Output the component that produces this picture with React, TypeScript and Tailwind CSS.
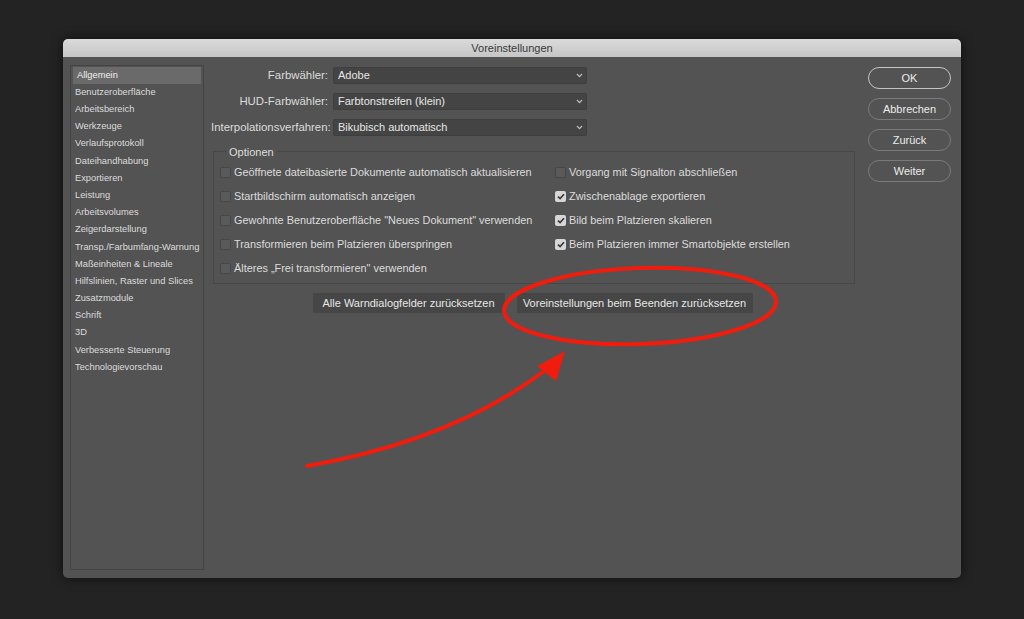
import React from 'react';

const SIDEBAR = [
  'Allgemein',
  'Benutzeroberfläche',
  'Arbeitsbereich',
  'Werkzeuge',
  'Verlaufsprotokoll',
  'Dateihandhabung',
  'Exportieren',
  'Leistung',
  'Arbeitsvolumes',
  'Zeigerdarstellung',
  'Transp./Farbumfang-Warnung',
  'Maßeinheiten & Lineale',
  'Hilfslinien, Raster und Slices',
  'Zusatzmodule',
  'Schrift',
  '3D',
  'Verbesserte Steuerung',
  'Technologievorschau',
];

const DROPDOWNS = [
  { label: 'Farbwähler:', value: 'Adobe' },
  { label: 'HUD-Farbwähler:', value: 'Farbtonstreifen (klein)' },
  { label: 'Interpolationsverfahren:', value: 'Bikubisch automatisch' },
];

const LEFT_OPTS = [
  { text: 'Geöffnete dateibasierte Dokumente automatisch aktualisieren', on: false },
  { text: 'Startbildschirm automatisch anzeigen', on: false },
  { text: 'Gewohnte Benutzeroberfläche "Neues Dokument" verwenden', on: false },
  { text: 'Transformieren beim Platzieren überspringen', on: false },
  { text: 'Älteres „Frei transformieren" verwenden', on: false },
];

const RIGHT_OPTS = [
  { text: 'Vorgang mit Signalton abschließen', on: false },
  { text: 'Zwischenablage exportieren', on: true },
  { text: 'Bild beim Platzieren skalieren', on: true },
  { text: 'Beim Platzieren immer Smartobjekte erstellen', on: true },
];

function Checkbox({ on }: { on: boolean }) {
  if (on) {
    return (
      <span className="flex h-[11px] w-[11px] shrink-0 items-center justify-center rounded-[2px] bg-[#d6d6d6]">
        <svg width="8" height="7" viewBox="0 0 8 7" aria-hidden="true">
          <path d="M1 3.6 L3.1 5.6 L7 1.2" fill="none" stroke="#3a3a3a" strokeWidth="1.7" />
        </svg>
      </span>
    );
  }
  return <span className="h-[11px] w-[11px] shrink-0 rounded-[2px] border border-[#464646] bg-[#5a5a5a]" />;
}

function Option({ text, on }: { text: string; on: boolean }) {
  return (
    <div className="flex h-6 items-center gap-[3px] whitespace-nowrap">
      <Checkbox on={on} />
      <span>{text}</span>
    </div>
  );
}

function SideButton({ children, primary }: { children: React.ReactNode; primary?: boolean }) {
  return (
    <button
      type="button"
      className={`flex h-[22px] w-[83px] items-center justify-center rounded-full border text-[11px] text-[#ececec] ${
        primary ? 'border-[#c4c4c4]' : 'border-[#7a7a7a]'
      }`}
    >
      {children}
    </button>
  );
}

export default function App() {
  return (
    <div
      className="relative h-[619px] w-[1024px] overflow-hidden bg-[#232323] pl-[63px] pt-[39px] text-[10.9px] text-[#dcdcdc]"
      style={{ fontFamily: '"Liberation Sans", Arial, sans-serif' }}
    >
      <div className="flex h-[539px] w-[898px] flex-col overflow-hidden rounded-[5px] bg-[#535353] shadow-[0_0_12px_rgba(0,0,0,0.6)]">
        {/* title bar */}
        <div className="flex h-[18px] shrink-0 items-center justify-center bg-gradient-to-b from-[#dadada] to-[#c6c6c6] text-[11px] text-[#3a3a3a]">
          Voreinstellungen
        </div>

        <div className="flex flex-1 pb-2">
          {/* sidebar */}
          <div className="ml-[7px] mt-[8px] w-[134px] border border-[#444] pt-[1px] text-[9.3px]">
            {SIDEBAR.map((s, i) => (
              <div
                key={s}
                className={`flex h-[17.2px] items-center whitespace-nowrap pl-[4px] ${
                  i === 0 ? 'mx-[2px] bg-[#6a6a6a] pl-[2px] text-[#f0f0f0]' : ''
                }`}
              >
                {s}
              </div>
            ))}
          </div>

          {/* main */}
          <div className="flex w-[657px] flex-col pt-[10px]">
            <div className="flex flex-col gap-[9px] pl-[7px]">
              {DROPDOWNS.map((d) => (
                <div key={d.label} className="flex h-[17px] items-center gap-[5px]">
                  <span className="w-[117px] whitespace-nowrap text-right text-[11.4px]">{d.label}</span>
                  <div className="flex h-[17px] w-[254px] items-center justify-between rounded-[2px] border border-[#3e3e3e] bg-[#444] pl-[4px] pr-[3px] text-[11px] text-[#e6e6e6]">
                    <span>{d.value}</span>
                    <svg width="7" height="5" viewBox="0 0 7 5" aria-hidden="true">
                      <path d="M1 1 L3.5 3.6 L6 1" fill="none" stroke="#bdbdbd" strokeWidth="1.2" />
                    </svg>
                  </div>
                </div>
              ))}
            </div>

            {/* Optionen group */}
            <div className="relative ml-[9px] mt-[15px] h-[133px] w-[642px] border border-[#474747] pl-[6px] pt-[8px]">
              <span className="absolute -top-[8px] left-[12px] bg-[#535353] px-[3px] text-[11px] text-[#dedede]">
                Optionen
              </span>
              <div className="flex">
                <div className="flex w-[335px] flex-col">
                  {LEFT_OPTS.map((o) => (
                    <Option key={o.text} {...o} />
                  ))}
                </div>
                <div className="flex flex-col">
                  {RIGHT_OPTS.map((o) => (
                    <Option key={o.text} {...o} />
                  ))}
                </div>
              </div>
            </div>

            <div className="mt-[9px] flex justify-center gap-[12px] text-[11px]">
              <div className="flex h-[20px] w-[192px] items-center justify-center bg-[#464646] text-[#e6e6e6]">
                Alle Warndialogfelder zurücksetzen
              </div>
              <div className="flex h-[20px] w-[236px] items-center justify-center bg-[#464646] text-[#e6e6e6]">
                Voreinstellungen beim Beenden zurücksetzen
              </div>
            </div>
          </div>

          {/* right buttons */}
          <div className="ml-[7px] flex flex-col gap-[9px] pt-[10px]">
            <SideButton primary>OK</SideButton>
            <SideButton>Abbrechen</SideButton>
            <SideButton>Zurück</SideButton>
            <SideButton>Weiter</SideButton>
          </div>
        </div>
      </div>

      {/* red annotation */}
      <svg className="pointer-events-none absolute inset-0" width="1024" height="619" viewBox="0 0 1024 619" aria-hidden="true">
        <ellipse cx="640" cy="306" rx="136" ry="38" transform="rotate(-2 640 306)" fill="none" stroke="#f01d0e" strokeWidth="4" />
        <path d="M307 466 Q 455 440 548 368" fill="none" stroke="#f01d0e" strokeWidth="4" strokeLinecap="round" />
        <polygon points="565,351 537,366 556,381" fill="#f01d0e" />
      </svg>
    </div>
  );
}
